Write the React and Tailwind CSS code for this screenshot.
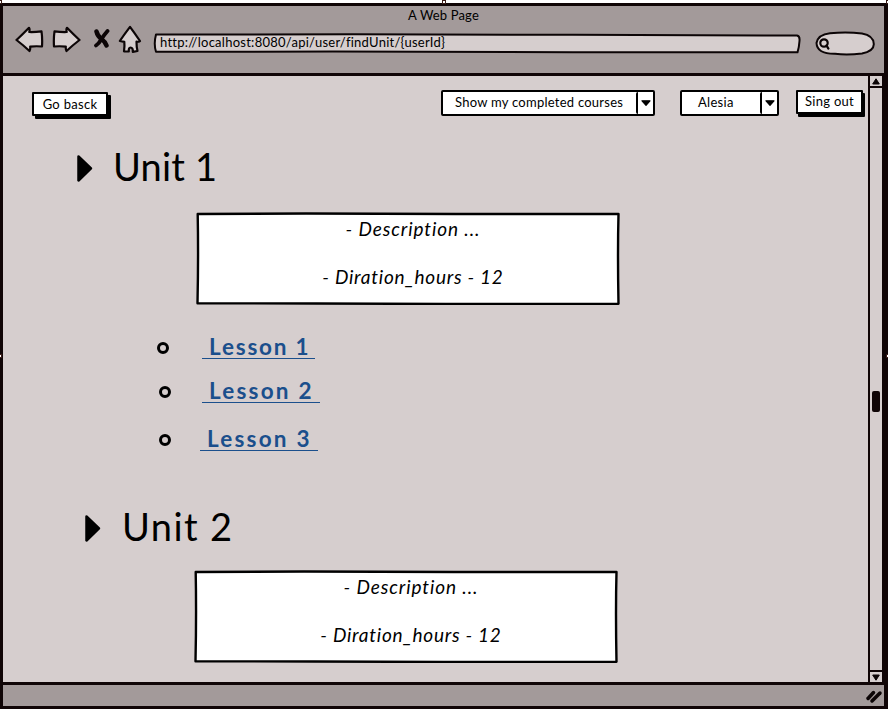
const ArrowIcon = ({ flip }) => (
  <svg width="29" height="28" viewBox="0 0 29 28" className={flip ? "-scale-x-100" : ""}>
    <path d="M1.500 14 Q8 8 14 1.800 Q15 3 14.300 6 Q20 6.200 26.500 5.300 Q27.500 12 27 20.500 Q21 20 15.200 20.600 Q15.500 23 14.500 25 Q8 19 1.500 14 Z" fill="#d6cece" stroke="#0c0506" strokeWidth="2.200" strokeLinejoin="round" />
  </svg>
);

const CloseIcon = () => (
  <svg width="17" height="20" viewBox="0 0 17 20" stroke="#0c0506" strokeLinecap="round" fill="none">
    <path d="M3.500 2.500 Q4.500 7 8.500 10 Q12 12.500 13.500 16.500" strokeWidth="4.500" />
    <path d="M14.500 2 Q11 6 8.500 10 Q6 14.500 3 16.500" strokeWidth="3.800" />
  </svg>
);

const HomeIcon = () => (
  <svg width="24" height="29" viewBox="0 0 24 29">
    <path d="M12 1.800 Q17 8.500 22 16 Q20.500 17 18.500 16.700 Q18.500 22 19.500 26 L14.800 26.800 Q15 22.500 12.500 22.500 Q10.500 22.500 10.800 26.500 L6 26.300 Q6.800 21 6.300 16.800 L1.800 16 Q6.500 9 12 1.800 Z" fill="#d6cece" stroke="#0c0506" strokeWidth="2.200" strokeLinejoin="round" />
  </svg>
);

const SearchIcon = () => (
  <svg width="12" height="12" viewBox="0 0 12 12" fill="none" stroke="#0c0506" strokeLinecap="round">
    <circle cx="5" cy="5" r="3.700" strokeWidth="2.200" />
    <path d="M7.500 7.500 L9.300 10.500" strokeWidth="2.400" />
  </svg>
);

const Caret = () => (
  <svg width="10" height="6" viewBox="0 0 10 6">
    <path d="M1 0.800 H9 L5 5.300 Z" fill="#000" stroke="#000" strokeWidth="1.200" strokeLinejoin="round" />
  </svg>
);

const ScrollArrow = ({ down }) => (
  <svg width="8" height="7" viewBox="0 0 8 7" className={down ? "rotate-180" : ""}>
    <path d="M4 0.800 L7.300 6 H0.700 Z" fill="#0c0506" stroke="#0c0506" strokeLinejoin="round" />
  </svg>
);

const Handle = ({ className }) => (
  <span className={"absolute size-[4px] border border-[#3a1c18] bg-white " + className} />
);

const Button = ({ className, children }) => (
  <button className={"flex h-[24px] items-center justify-center whitespace-nowrap rounded-[1px] border-2 border-black bg-white text-[13px] leading-none tracking-[0.3px] " + className}>
    {children}
  </button>
);

const Select = ({ className, textClass, children }) => (
  <div className={"flex h-[26px] rounded-[2px] border-2 border-black bg-white text-[13px] leading-none " + className}>
    <span className={"flex grow items-center whitespace-nowrap pb-[2px] " + textClass}>{children}</span>
    <span className="flex w-[17px] items-center justify-center rounded-l-[2px] border-l-2 border-black">
      <Caret />
    </span>
  </div>
);

const UnitTitle = ({ className, textClass, children }) => (
  <div className={"flex h-[40px] shrink-0 items-center " + className}>
    <svg width="17" height="29" viewBox="0 0 17 29" className="shrink-0">
      <path d="M2.500 2.500 L15 14.300 L2.500 26.500 Z" fill="#000" stroke="#000" strokeWidth="2.500" strokeLinejoin="round" />
    </svg>
    <h1 className={"mb-[5px] whitespace-nowrap text-[38px] leading-[40px] " + textClass}>{children}</h1>
  </div>
);

const Details = ({ className }) => (
  <div className={"relative flex h-[93px] w-[424px] shrink-0 flex-col items-center pt-[5px] text-[19px] italic leading-[24px] " + className}>
    <svg width="424" height="93" viewBox="0 0 424 93" className="absolute inset-0">
      <path d="M1.700 2 L110 1.500 L260 2 L422.500 2 Q421.500 40 422.500 91.700 L250 92 L120 91.500 L1.500 91.200 Q2.500 45 1.700 2 Z" fill="#fff" stroke="#000" strokeWidth="2.400" strokeLinejoin="round" />
    </svg>
    <p className="relative mb-[24px] ml-[10px] whitespace-nowrap tracking-[0.9px]">- Description ...</p>
    <p className="relative ml-[10px] whitespace-nowrap tracking-[0.75px]">- Diration_hours - 12</p>
  </div>
);

const Lesson = ({ className, linkClass, children }) => (
  <li className={"flex h-[28px] shrink-0 items-center " + className}>
    <span className="size-[12px] shrink-0 rounded-full border-[3px] border-black" />
    <a className={"mb-[4px] h-[26px] whitespace-nowrap border-b border-[#1b4f8c] pl-[7px] text-[22.500px] font-bold leading-[27px] text-[#1b4f8c] " + linkClass}>{children}</a>
  </li>
);

export default function App() {
  return (
    <div className="relative flex h-[710px] w-[888px] flex-col overflow-hidden bg-white pt-[3px] font-['Lato','Open_Sans',sans-serif] text-black">
      <div className="flex h-[706px] flex-col border-y-[3px] border-l-[3px] border-r-[4px] border-[#100506] bg-[#d6cece]">
        <header className="flex h-[70px] shrink-0 flex-col border-b-[3px] border-[#100506] bg-[#a39a9a]">
          <div className="h-[18px] text-center text-[13px] leading-[18px] tracking-[0.15px]">A Web Page</div>
          <div className="flex h-[34px] items-center pl-[12px]">
            <span className="mb-[3px] flex"><ArrowIcon /></span>
            <span className="mb-[3px] ml-[8px] flex"><ArrowIcon flip /></span>
            <span className="mb-[5px] ml-[12px] flex"><CloseIcon /></span>
            <span className="mb-[4px] ml-[8px] flex"><HomeIcon /></span>
            <div className="relative ml-[11px] mt-[5px] flex h-[21px] w-[648px] items-center pb-[3px] pl-[7px] text-[13px] leading-none tracking-[0.26px]">
              <svg width="648" height="21" viewBox="0 0 648 21" className="absolute inset-0">
                <path d="M3 1.500 L200 1.300 L420 1.800 L644 2.500 Q647 3 646.500 8 Q646 15 644.500 19.300 L420 19.300 L180 18.500 L3 18.800 Q0.500 11 3 1.500 Z" fill="#d6cece" stroke="#0c0506" strokeWidth="2" strokeLinejoin="round" />
              </svg>
              <span className="relative">http://localhost:8080/api/user/findUnit/&#123;userId&#125;</span>
            </div>
            <div className="relative ml-[14px] mt-[4px] flex h-[25px] w-[60px] items-center pl-[4px] pt-[2px]">
              <svg width="60" height="25" viewBox="0 0 60 25" className="absolute inset-0">
                <path d="M1.500 12 Q3 3.500 15 2.200 Q32 0.500 47 2.500 Q58.500 4.500 58.800 13 Q59 20 47 22.500 Q32 24.500 20 22.800 Q2 23 1.500 12 Z" fill="#d6cece" stroke="#0c0506" strokeWidth="2" />
              </svg>
              <span className="relative flex"><SearchIcon /></span>
            </div>
          </div>
        </header>
        <div className="flex min-h-0 grow">
          <main className="flex min-w-0 grow flex-col">
            <div className="flex h-[44px] shrink-0 items-start pl-[29px] pt-[14px]">
              <Button className="mt-[2px] w-[76px] shadow-[3px_3px_0_#000]">Go basck</Button>
              <Select className="ml-[333px] w-[214px]" textClass="pl-[12px] tracking-[0.25px]">Show my completed courses</Select>
              <Select className="ml-[25px] w-[99px]" textClass="pl-[16px] tracking-[0.3px]">Alesia</Select>
              <Button className="ml-[17px] w-[67px] pb-[2px] shadow-[2px_3px_0_#000]">Sing out</Button>
            </div>
            <UnitTitle className="mt-[28px] pl-[73px]" textClass="ml-[20px] tracking-[0.2px]">Unit 1</UnitTitle>
            <Details className="ml-[193px] mt-[24px]" />
            <ul className="flex flex-col">
              <Lesson className="mt-[29px] pl-[154px]" linkClass="ml-[33px] w-[113px] tracking-[1.800px]">Lesson 1</Lesson>
              <Lesson className="mt-[16px] pl-[156px]" linkClass="ml-[31px] w-[118px] tracking-[2.200px]">Lesson 2</Lesson>
              <Lesson className="mt-[20px] pl-[156px]" linkClass="ml-[29px] w-[118px] tracking-[2.200px]">Lesson 3</Lesson>
            </ul>
            <UnitTitle className="mt-[54px] pl-[81px]" textClass="ml-[21px] tracking-[1.400px]">Unit 2</UnitTitle>
            <Details className="ml-[191px] mt-[22px]" />
          </main>
          <aside className="flex w-[16px] shrink-0 flex-col border-x-2 border-[#100506]">
            <div className="flex h-[12px] items-center justify-center border-b-2 border-[#100506]"><ScrollArrow /></div>
            <div className="flex grow flex-col items-center pt-[303px]">
              <div className="h-[21px] w-[8px] rounded-[2px] bg-[#100506]" />
            </div>
            <div className="flex h-[12px] items-center justify-center border-t-2 border-[#100506]"><ScrollArrow down /></div>
          </aside>
        </div>
        <footer className="flex h-[24px] shrink-0 items-center justify-end border-t-[3px] border-[#100506] bg-[#a39a9a]">
          <svg width="19" height="16" viewBox="0 0 19 16" fill="none" stroke="#0c0506" strokeWidth="3.500" strokeLinecap="round">
            <path d="M3 10.500 L8.500 4.500" />
            <path d="M7 13 L15 5" />
          </svg>
        </footer>
      </div>
      <Handle className="left-[-2px] top-0" />
      <Handle className="left-[442px] top-0" />
      <Handle className="right-[-2px] top-0" />
      <Handle className="left-[-2px] top-[354px]" />
      <Handle className="right-[-2px] top-[354px]" />
    </div>
  );
}
